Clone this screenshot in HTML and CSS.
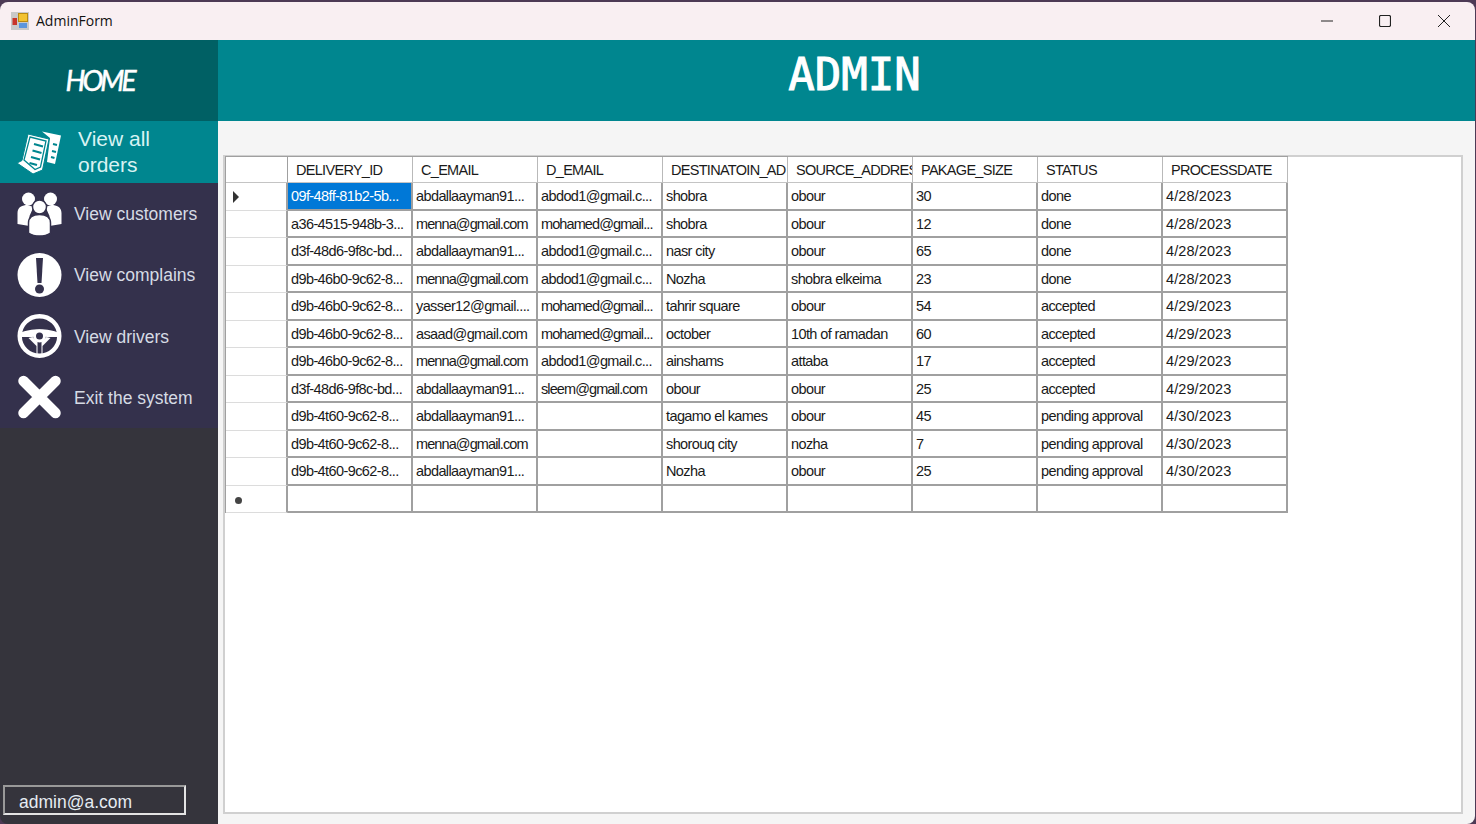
FILE: index.html
```html
<!DOCTYPE html>
<html lang="en">
<head>
    <meta charset="UTF-8">
    <title>AdminForm</title>
    <link rel="stylesheet" href="styles.css">
</head>
<body>
    <div class="window">
        <div class="titlebar">
            <svg class="app-icon" viewBox="0 0 18 18">
                <rect width="18" height="18" fill="#c9c9c9"/>
                <rect x="7.500" y="1.500" width="9" height="8" fill="#f2c230" stroke="#b98a12"/>
                <rect x="1.500" y="6" width="4.500" height="7" fill="#c8352b"/>
                <rect x="8" y="11" width="8" height="5" fill="#5b96de"/>
            </svg>
            <span class="app-name">AdminForm</span>
            <div class="win-buttons">
                <svg viewBox="0 0 12 12"><path d="M0 6H12" stroke="#222" fill="none"/></svg>
                <svg viewBox="0 0 12 12"><rect x="0.500" y="0.500" width="11" height="11" rx="1.500" stroke="#222" stroke-width="1.200" fill="none"/></svg>
                <svg class="win-close" viewBox="0 0 12 12"><path d="M0 0L12 12M12 0L0 12" stroke="#222" fill="none"/></svg>
            </div>
        </div>
        <div class="content">
            <div class="sidebar">
                <div class="home">HOME</div>
                <div class="nav-item active">
                    <svg class="nav-icon" viewBox="0 0 45 44">
                        <path d="M25 1.500L44 5.500L38 34L30 32L33 8Z" fill="#fff"/>
                        <path d="M11 4L32 9L25.500 40L16 44L0 33L5 30.500Z" fill="#fff" stroke="#00868f" stroke-width="1"/>
                        <path d="M13 7L29 11L23.500 37L18 39.500L7 30Z" fill="none" stroke="#00868f" stroke-width="1.300"/>
                        <path d="M17 14L26 16.500M15.500 20.500L24.500 23M14 27L23 29.500M12.500 33L20 35" stroke="#00868f" stroke-width="2.200" fill="none"/>
                        <path d="M36 14L40 15M35 21L39 22M34 27L37.500 28" stroke="#00868f" stroke-width="2" fill="none"/>
                    </svg>
                    <span class="nav-label">View all orders</span>
                </div>
                <div class="nav-item">
                    <svg class="nav-icon" viewBox="0 0 44 44">
                        <circle cx="11" cy="7" r="6.500" fill="#fff"/>
                        <circle cx="33" cy="7" r="6.500" fill="#fff"/>
                        <path d="M0 32V21C0 15 5 13 10 13L16 15L12 24V34Z" fill="#fff"/>
                        <path d="M44 32V21C44 15 39 13 34 13L28 15L32 24V34Z" fill="#fff"/>
                        <circle cx="22" cy="15" r="7" fill="#fff" stroke="#34314c" stroke-width="1.500"/>
                        <path d="M11 41V31C11 25 16 22.500 22 22.500C28 22.500 33 25 33 31V41C27 45 17 45 11 41Z" fill="#fff" stroke="#34314c" stroke-width="1.500"/>
                    </svg>
                    <span class="nav-label">View customers</span>
                </div>
                <div class="nav-item">
                    <svg class="nav-icon" viewBox="0 0 44 44">
                        <circle cx="22" cy="22" r="22" fill="#fff"/>
                        <path d="M18.500 5H25.500L24 30H20Z" fill="#34314c"/>
                        <circle cx="22" cy="36" r="4.500" fill="#34314c"/>
                    </svg>
                    <span class="nav-label">View complains</span>
                </div>
                <div class="nav-item">
                    <svg class="nav-icon" viewBox="0 0 44 44">
                        <circle cx="22" cy="22" r="19.800" fill="none" stroke="#fff" stroke-width="4.400"/>
                        <path d="M3 19C12 14 32 14 41 19L41 23L29 23L25 20H19L15 23L3 23Z" fill="#fff"/>
                        <path d="M15 23L20 28V42H24V28L29 23L33 24L25 32V42H19V32L11 24Z" fill="#fff"/>
                        <circle cx="22" cy="22" r="6.500" fill="#fff"/>
                        <circle cx="22" cy="22" r="3.500" fill="#34314c"/>
                    </svg>
                    <span class="nav-label">View drivers</span>
                </div>
                <div class="nav-item">
                    <svg class="nav-icon" viewBox="0 0 44 44">
                        <path d="M6 6L38 38M38 6L6 38" stroke="#fff" stroke-width="10.500" stroke-linecap="round"/>
                    </svg>
                    <span class="nav-label">Exit the system</span>
                </div>
                <div class="user-box">admin@a.com</div>
            </div>
            <div class="main">
                <div class="banner">ADMIN</div>
                <div class="panel-wrap">
                    <div class="panel">
                        <div class="grid">
                            <div class="head corner"></div>
                            <div class="head">DELIVERY_ID</div>
                            <div class="head">C_EMAIL</div>
                            <div class="head">D_EMAIL</div>
                            <div class="head">DESTINATOIN_AD</div>
                            <div class="head">SOURCE_ADDRES</div>
                            <div class="head">PAKAGE_SIZE</div>
                            <div class="head">STATUS</div>
                            <div class="head">PROCESSDATE</div>

                            <div class="rowhead"><span class="arrow"></span></div>
                            <div class="cell selected">09f-48ff-81b2-5b...</div>
                            <div class="cell">abdallaayman91...</div>
                            <div class="cell">abdod1@gmail.c...</div>
                            <div class="cell">shobra</div>
                            <div class="cell">obour</div>
                            <div class="cell">30</div>
                            <div class="cell">done</div>
                            <div class="cell">4/28/2023</div>

                            <div class="rowhead"></div>
                            <div class="cell">a36-4515-948b-3...</div>
                            <div class="cell tight">menna@gmail.com</div>
                            <div class="cell tight">mohamed@gmail...</div>
                            <div class="cell">shobra</div>
                            <div class="cell">obour</div>
                            <div class="cell">12</div>
                            <div class="cell">done</div>
                            <div class="cell">4/28/2023</div>

                            <div class="rowhead"></div>
                            <div class="cell">d3f-48d6-9f8c-bd...</div>
                            <div class="cell">abdallaayman91...</div>
                            <div class="cell">abdod1@gmail.c...</div>
                            <div class="cell">nasr city</div>
                            <div class="cell">obour</div>
                            <div class="cell">65</div>
                            <div class="cell">done</div>
                            <div class="cell">4/28/2023</div>

                            <div class="rowhead"></div>
                            <div class="cell">d9b-46b0-9c62-8...</div>
                            <div class="cell tight">menna@gmail.com</div>
                            <div class="cell">abdod1@gmail.c...</div>
                            <div class="cell">Nozha</div>
                            <div class="cell">shobra elkeima</div>
                            <div class="cell">23</div>
                            <div class="cell">done</div>
                            <div class="cell">4/28/2023</div>

                            <div class="rowhead"></div>
                            <div class="cell">d9b-46b0-9c62-8...</div>
                            <div class="cell">yasser12@gmail....</div>
                            <div class="cell tight">mohamed@gmail...</div>
                            <div class="cell">tahrir square</div>
                            <div class="cell">obour</div>
                            <div class="cell">54</div>
                            <div class="cell">accepted</div>
                            <div class="cell">4/29/2023</div>

                            <div class="rowhead"></div>
                            <div class="cell">d9b-46b0-9c62-8...</div>
                            <div class="cell">asaad@gmail.com</div>
                            <div class="cell tight">mohamed@gmail...</div>
                            <div class="cell">october</div>
                            <div class="cell">10th of ramadan</div>
                            <div class="cell">60</div>
                            <div class="cell">accepted</div>
                            <div class="cell">4/29/2023</div>

                            <div class="rowhead"></div>
                            <div class="cell">d9b-46b0-9c62-8...</div>
                            <div class="cell tight">menna@gmail.com</div>
                            <div class="cell">abdod1@gmail.c...</div>
                            <div class="cell">ainshams</div>
                            <div class="cell">attaba</div>
                            <div class="cell">17</div>
                            <div class="cell">accepted</div>
                            <div class="cell">4/29/2023</div>

                            <div class="rowhead"></div>
                            <div class="cell">d3f-48d6-9f8c-bd...</div>
                            <div class="cell">abdallaayman91...</div>
                            <div class="cell tight">sleem@gmail.com</div>
                            <div class="cell">obour</div>
                            <div class="cell">obour</div>
                            <div class="cell">25</div>
                            <div class="cell">accepted</div>
                            <div class="cell">4/29/2023</div>

                            <div class="rowhead"></div>
                            <div class="cell">d9b-4t60-9c62-8...</div>
                            <div class="cell">abdallaayman91...</div>
                            <div class="cell"></div>
                            <div class="cell">tagamo el kames</div>
                            <div class="cell">obour</div>
                            <div class="cell">45</div>
                            <div class="cell">pending approval</div>
                            <div class="cell">4/30/2023</div>

                            <div class="rowhead"></div>
                            <div class="cell">d9b-4t60-9c62-8...</div>
                            <div class="cell tight">menna@gmail.com</div>
                            <div class="cell"></div>
                            <div class="cell">shorouq city</div>
                            <div class="cell">nozha</div>
                            <div class="cell">7</div>
                            <div class="cell">pending approval</div>
                            <div class="cell">4/30/2023</div>

                            <div class="rowhead"></div>
                            <div class="cell">d9b-4t60-9c62-8...</div>
                            <div class="cell">abdallaayman91...</div>
                            <div class="cell"></div>
                            <div class="cell">Nozha</div>
                            <div class="cell">obour</div>
                            <div class="cell">25</div>
                            <div class="cell">pending approval</div>
                            <div class="cell">4/30/2023</div>

                            <div class="rowhead"><span class="star"></span></div>
                            <div class="cell"></div>
                            <div class="cell"></div>
                            <div class="cell"></div>
                            <div class="cell"></div>
                            <div class="cell"></div>
                            <div class="cell"></div>
                            <div class="cell"></div>
                            <div class="cell"></div>
                        </div>
                    </div>
                </div>
            </div>
        </div>
    </div>
</body>
</html>
```

FILE: styles.css
```css
html, body {
    margin: 0;
    height: 100%;
    overflow: hidden;
    background: #4d3a55;
}
.window {
    height: 822px;
    margin-top: 2px;
    margin-right: 1px;
    border-radius: 8px;
    overflow: hidden;
    display: flex;
    flex-direction: column;
    font-family: "Liberation Sans", Arial, sans-serif;
}
.titlebar {
    height: 38px;
    flex-shrink: 0;
    display: flex;
    align-items: center;
    padding-left: 11px;
    background: #f9eff2;
}
.app-icon {
    width: 18px;
    height: 18px;
}
.app-name {
    margin-left: 7px;
    margin-bottom: 2px;
    font-family: "Open Sans", sans-serif;
    font-size: 14px;
    color: #111;
}
.win-buttons {
    margin-left: auto;
    display: flex;
    align-items: center;
    gap: 46px;
    padding-right: 25px;
}
.win-buttons svg {
    width: 12px;
    height: 12px;
}
.win-buttons .win-close {
    margin-left: 1px;
}
.content {
    flex: 1;
    display: flex;
    min-height: 0;
}
.sidebar {
    width: 218px;
    flex-shrink: 0;
    display: flex;
    flex-direction: column;
    background: #35343c;
}
.home {
    height: 81px;
    display: flex;
    align-items: center;
    justify-content: center;
    padding: 0 19px 2px 0;
    box-sizing: border-box;
    background: #006064;
    color: #fff;
    font-family: Lato, sans-serif;
    font-style: italic;
    font-size: 28px;
    letter-spacing: -3px;
    -webkit-text-stroke: 0.500px #fff;
}
.nav-item {
    height: 61.250px;
    display: flex;
    align-items: center;
    padding-left: 17px;
    background: #34314c;
    color: #d6dbe4;
    font-size: 17.500px;
}
.nav-item.active {
    height: 62px;
    background: #00868f;
    color: #d9f3f3;
    font-size: 21px;
    line-height: 26px;
}
.nav-icon {
    width: 45px;
    height: 44px;
    flex-shrink: 0;
}
.nav-label {
    margin-left: 12px;
    padding-top: 2px;
}
.active .nav-label {
    margin-left: 16px;
    padding-top: 0;
    width: 110px;
}
.user-box {
    margin: auto 0 9px 3px;
    width: 183px;
    height: 30px;
    box-sizing: border-box;
    border: 2px solid #e4e4e4;
    border-top-color: #999;
    border-left-color: #999;
    padding-left: 14px;
    line-height: 30px;
    font-size: 17.500px;
    color: #e6ecf2;
}
.main {
    flex: 1;
    min-width: 0;
    display: flex;
    flex-direction: column;
    background: #f5f5f5;
}
.banner {
    height: 81px;
    flex-shrink: 0;
    box-sizing: border-box;
    padding: 7px 0 0 16px;
    text-align: center;
    background: #00868f;
    color: #fff;
    font-family: "DejaVu Sans Mono", monospace;
    font-size: 44px;
    line-height: 56px;
    -webkit-text-stroke: 1px #fff;
}
.panel-wrap {
    flex: 1;
    min-height: 0;
    padding: 34px 12px 10px 5px;
}
.panel {
    height: 100%;
    box-sizing: border-box;
    border: 2px solid #d0d0d0;
    background: #fff;
}
.grid {
    display: grid;
    grid-template-columns: 62px repeat(8, 125px);
    grid-template-rows: 26px repeat(12, 27.500px);
    width: 1062px;
    color: #1a1a1a;
    border-left: 1px solid #a0a0a0;
    border-top: 1px solid #a0a0a0;
    margin-top: -1px;
}
.head {
    box-sizing: border-box;
    padding-left: 8px;
    line-height: 26px;
    font-size: 14.500px;
    white-space: nowrap;
    overflow: hidden;
    border-right: 1px solid #b9b9b9;
    border-bottom: 1px solid #c4c4c4;
    letter-spacing: -0.700px;
}
.head.corner {
    border-right: 1px solid #a0a0a0;
}
.rowhead {
    box-sizing: border-box;
    position: relative;
    border-right: 2px solid #a0a0a0;
    border-bottom: 1px solid #dcdcdc;
}
.arrow {
    position: absolute;
    left: 7px;
    top: 8px;
    border-left: 6px solid #333;
    border-top: 6px solid transparent;
    border-bottom: 6px solid transparent;
}
.star {
    position: absolute;
    left: 9px;
    top: 11px;
    width: 7px;
    height: 7px;
    border-radius: 50%;
    background: #444;
}
.cell {
    box-sizing: border-box;
    padding-left: 3px;
    line-height: 26px;
    font-size: 14.500px;
    white-space: nowrap;
    overflow: hidden;
    border-right: 2px solid #a0a0a0;
    border-bottom: 2px solid #a0a0a0;
    letter-spacing: -0.600px;
}
.cell.tight {
    letter-spacing: -0.900px;
}
/* date column, digits run wider than the letters */
.cell:nth-child(9n) {
    letter-spacing: 0.100px;
}
.cell.selected {
    background: #0078d7;
    color: #fff;
}
```
